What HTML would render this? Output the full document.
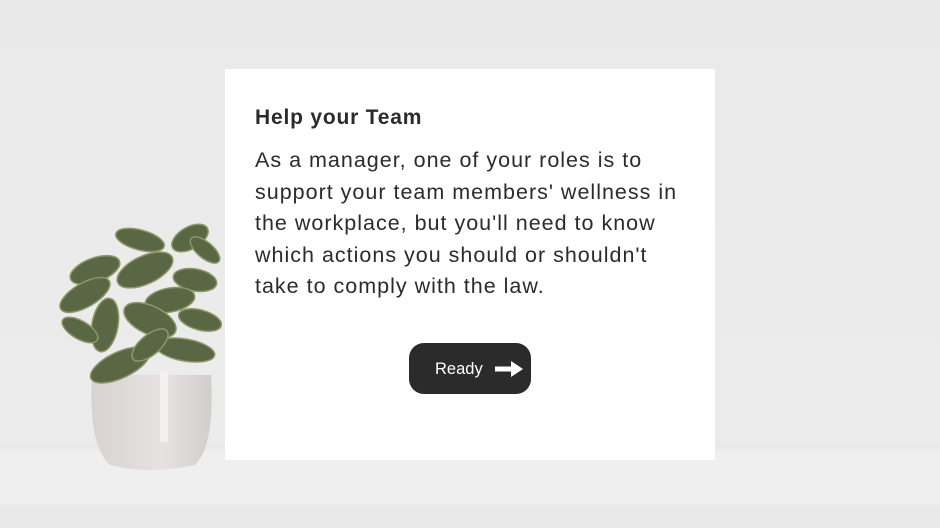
<!DOCTYPE html>
<html><head><style>
html,body{margin:0;padding:0}
body{width:940px;height:528px;position:relative;overflow:hidden;font-family:"Liberation Sans",sans-serif;
background:linear-gradient(to bottom,#e9e9e9 0px,#ececec 442px,#e8e8e8 446px,#efefef 452px,#efefef 502px,#e9e9e9 508px,#e9e9e9 528px);}
.card{position:absolute;left:225px;top:69px;width:490px;height:391px;background:#fff}
.t{position:absolute;left:255px;top:106px;font-size:21px;font-weight:bold;color:#2b2b2b;letter-spacing:0.8px}
.b{position:absolute;left:255px;top:145px;font-size:21.5px;line-height:31.5px;color:#2b2b2b;letter-spacing:1px;white-space:nowrap}
.btn{position:absolute;left:409px;top:343px;width:122px;height:51px;border-radius:15px;background:#2b2b2b;color:#fff}
.btn span{position:absolute;left:26px;top:17px;font-size:16.5px}
</style></head><body>
<svg style="position:absolute;left:0;top:0" width="940" height="528">
<defs><linearGradient id="p" x1="0" x2="1"><stop offset="0" stop-color="#d8d3d2"/><stop offset="0.6" stop-color="#e6e2e1"/><stop offset="1" stop-color="#d2cdcc"/></linearGradient></defs>
<path d="M92 375 Q88 445 110 465 Q150 475 195 465 Q215 445 211 375 Z" fill="url(#p)"/>
<rect x="160" y="372" width="8" height="70" fill="#f2f0f0"/>
<g fill="#5a6745" stroke="#8e9668" stroke-width="1.5">
<ellipse cx="140" cy="240" rx="25" ry="10" transform="rotate(15 140 240)"/>
<ellipse cx="190" cy="238" rx="20" ry="11" transform="rotate(-30 190 238)"/>
<ellipse cx="205" cy="250" rx="18" ry="8" transform="rotate(40 205 250)"/>
<ellipse cx="95" cy="270" rx="26" ry="12" transform="rotate(-20 95 270)"/>
<ellipse cx="85" cy="295" rx="28" ry="12" transform="rotate(-30 85 295)"/>
<ellipse cx="145" cy="270" rx="30" ry="14" transform="rotate(-25 145 270)"/>
<ellipse cx="195" cy="280" rx="22" ry="11" transform="rotate(10 195 280)"/>
<ellipse cx="170" cy="300" rx="25" ry="12" transform="rotate(-10 170 300)"/>
<ellipse cx="105" cy="325" rx="13" ry="27" transform="rotate(10 105 325)"/>
<ellipse cx="150" cy="320" rx="28" ry="14" transform="rotate(25 150 320)"/>
<ellipse cx="200" cy="320" rx="22" ry="10" transform="rotate(15 200 320)"/>
<ellipse cx="80" cy="330" rx="20" ry="9" transform="rotate(30 80 330)"/>
<ellipse cx="185" cy="350" rx="30" ry="11" transform="rotate(10 185 350)"/>
<ellipse cx="120" cy="365" rx="32" ry="13" transform="rotate(-25 120 365)"/>
<ellipse cx="150" cy="345" rx="22" ry="10" transform="rotate(-40 150 345)"/>
</g>
</svg>
<div class="card"></div>
<div class="t">Help your Team</div>
<div class="b">As a manager, one of your roles is to<br>support your team members' wellness in<br>the workplace, but you'll need to know<br>which actions you should or shouldn't<br>take to comply with the law.</div>
<div class="btn"><span>Ready</span>
<svg style="position:absolute;left:86px;top:17px" width="30" height="18"><path d="M0 6.5H16V1L28 9L16 17V11.5H0Z" fill="#fff"/></svg></div>
</body></html>
